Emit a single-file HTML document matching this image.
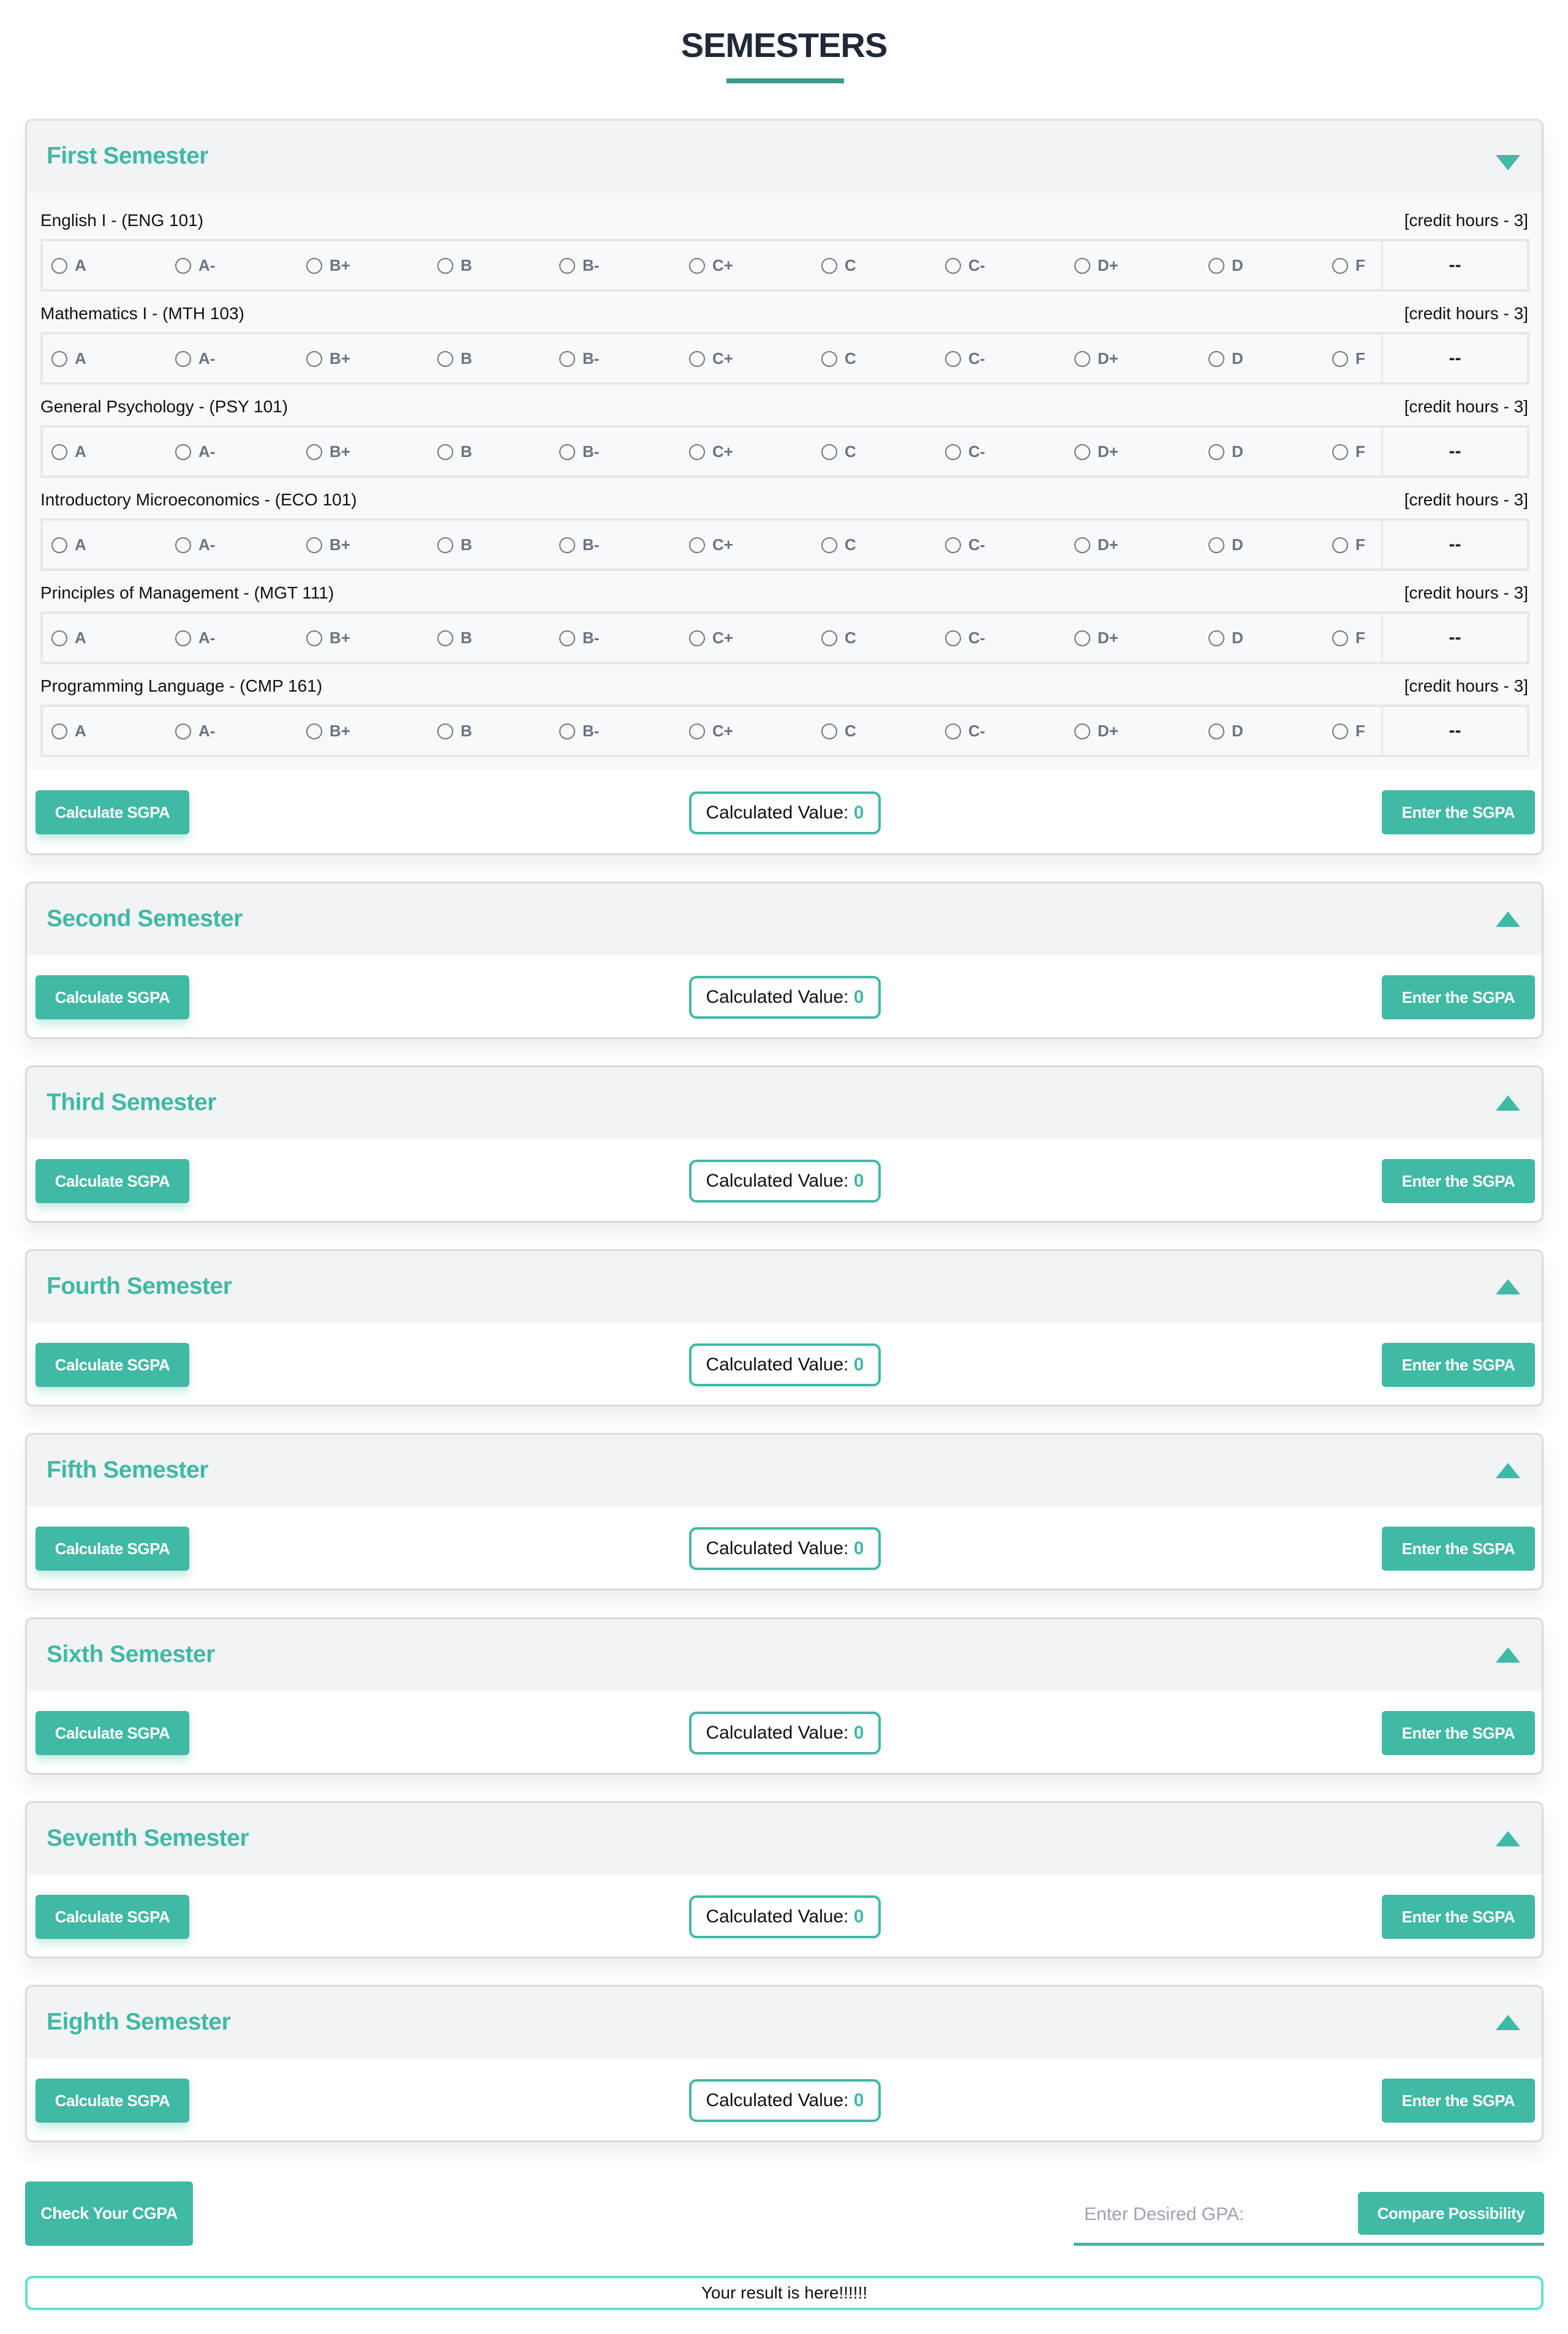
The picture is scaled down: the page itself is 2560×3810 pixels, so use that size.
<!DOCTYPE html>
<html><head><meta charset="utf-8"><style>
*{box-sizing:border-box;margin:0;padding:0}
body{width:2560px;height:3810px;background:#fff;font-family:"Liberation Sans",sans-serif;position:relative;overflow:hidden}
.title{position:absolute;left:0;width:2560px;top:41px;text-align:center;font-size:56px;font-weight:bold;color:#1f2937;letter-spacing:-1px}
.uline{position:absolute;left:1186px;width:192px;top:128px;height:8px;background:#339c8c}
.card{position:absolute;left:41px;width:2479px;border:3px solid #d8dadf;border-top-color:#dcdde2;border-radius:12px;background:#fff;box-shadow:0 18px 30px rgba(0,0,0,0.07);overflow:hidden}
.hd{position:absolute;left:0;top:0;right:0;height:117px;background:#f2f3f5}
.hd span{position:absolute;left:32px;top:36px;font-size:39px;font-weight:bold;color:#40b9a5;letter-spacing:-0.5px}
.tri{position:absolute;left:2398px;top:56px;width:0;height:0;border-left:20px solid transparent;border-right:20px solid transparent}
.down{border-top:25px solid #40b9a5}
.up{border-bottom:25px solid #40b9a5;top:46px}
.body{position:absolute;left:0;right:0;top:117px;height:943px;background:#f8f9fb;border-radius:0 0 14px 14px}
.lbl{position:absolute;left:22px;font-size:28px;color:#111;}
.ch{position:absolute;right:22px;font-size:28px;color:#111}
.box{position:absolute;left:22px;width:2431px;height:86px;border:4px solid #e5e7eb;background:#f8f9fb}
.box .dv{position:absolute;left:2185px;top:0;bottom:0;width:3px;background:#e9eaee}
.box .dd{position:absolute;left:2188px;right:0;top:22px;text-align:center;font-size:30px;font-weight:bold;color:#222}
.r{position:absolute;top:27px;width:26px;height:26px;border:2px solid #777;border-radius:50%}
.rl{position:absolute;top:24px;font-size:26px;font-weight:bold;color:#6b7280}
.btn{position:absolute;background:#40b9a5;color:#fff;font-weight:bold;font-size:26px;border-radius:6px;text-align:center;letter-spacing:-0.5px}
.b1{left:14px;width:251px;height:72px;line-height:72px;box-shadow:0 8px 14px rgba(64,185,165,0.3)}
.b2{left:2212px;width:250px;height:72px;line-height:72px}
.cv{position:absolute;left:1081px;width:313px;height:70px;border:4px solid #40b9a5;border-radius:12px;text-align:center;line-height:62px;font-size:30px;color:#111;background:#fff}
.cv b{color:#40b9a5;font-weight:bold}
</style></head><body>
<div class="title">SEMESTERS</div>
<div class="uline"></div>

<div class="card" style="top:194px;height:1202px">
<div class="hd"><span>First Semester</span><div class="tri down"></div></div>
<div class="body">
<div class="lbl" style="top:30px">English I - (ENG 101)</div><div class="ch" style="top:30px">[credit hours - 3]</div>
<div class="box" style="top:76px"><div class="dv"></div><div class="dd">--</div>
<div class="r" style="left:14px"></div><div class="rl" style="left:52px">A</div><div class="r" style="left:216px"></div><div class="rl" style="left:254px">A-</div><div class="r" style="left:430px"></div><div class="rl" style="left:468px">B+</div><div class="r" style="left:644px"></div><div class="rl" style="left:682px">B</div><div class="r" style="left:843px"></div><div class="rl" style="left:881px">B-</div><div class="r" style="left:1055px"></div><div class="rl" style="left:1093px">C+</div><div class="r" style="left:1271px"></div><div class="rl" style="left:1309px">C</div><div class="r" style="left:1473px"></div><div class="rl" style="left:1511px">C-</div><div class="r" style="left:1684px"></div><div class="rl" style="left:1722px">D+</div><div class="r" style="left:1903px"></div><div class="rl" style="left:1941px">D</div><div class="r" style="left:2105px"></div><div class="rl" style="left:2143px">F</div></div>

<div class="lbl" style="top:182px">Mathematics I - (MTH 103)</div><div class="ch" style="top:182px">[credit hours - 3]</div>
<div class="box" style="top:228px"><div class="dv"></div><div class="dd">--</div>
<div class="r" style="left:14px"></div><div class="rl" style="left:52px">A</div><div class="r" style="left:216px"></div><div class="rl" style="left:254px">A-</div><div class="r" style="left:430px"></div><div class="rl" style="left:468px">B+</div><div class="r" style="left:644px"></div><div class="rl" style="left:682px">B</div><div class="r" style="left:843px"></div><div class="rl" style="left:881px">B-</div><div class="r" style="left:1055px"></div><div class="rl" style="left:1093px">C+</div><div class="r" style="left:1271px"></div><div class="rl" style="left:1309px">C</div><div class="r" style="left:1473px"></div><div class="rl" style="left:1511px">C-</div><div class="r" style="left:1684px"></div><div class="rl" style="left:1722px">D+</div><div class="r" style="left:1903px"></div><div class="rl" style="left:1941px">D</div><div class="r" style="left:2105px"></div><div class="rl" style="left:2143px">F</div></div>

<div class="lbl" style="top:334px">General Psychology - (PSY 101)</div><div class="ch" style="top:334px">[credit hours - 3]</div>
<div class="box" style="top:380px"><div class="dv"></div><div class="dd">--</div>
<div class="r" style="left:14px"></div><div class="rl" style="left:52px">A</div><div class="r" style="left:216px"></div><div class="rl" style="left:254px">A-</div><div class="r" style="left:430px"></div><div class="rl" style="left:468px">B+</div><div class="r" style="left:644px"></div><div class="rl" style="left:682px">B</div><div class="r" style="left:843px"></div><div class="rl" style="left:881px">B-</div><div class="r" style="left:1055px"></div><div class="rl" style="left:1093px">C+</div><div class="r" style="left:1271px"></div><div class="rl" style="left:1309px">C</div><div class="r" style="left:1473px"></div><div class="rl" style="left:1511px">C-</div><div class="r" style="left:1684px"></div><div class="rl" style="left:1722px">D+</div><div class="r" style="left:1903px"></div><div class="rl" style="left:1941px">D</div><div class="r" style="left:2105px"></div><div class="rl" style="left:2143px">F</div></div>

<div class="lbl" style="top:486px">Introductory Microeconomics - (ECO 101)</div><div class="ch" style="top:486px">[credit hours - 3]</div>
<div class="box" style="top:532px"><div class="dv"></div><div class="dd">--</div>
<div class="r" style="left:14px"></div><div class="rl" style="left:52px">A</div><div class="r" style="left:216px"></div><div class="rl" style="left:254px">A-</div><div class="r" style="left:430px"></div><div class="rl" style="left:468px">B+</div><div class="r" style="left:644px"></div><div class="rl" style="left:682px">B</div><div class="r" style="left:843px"></div><div class="rl" style="left:881px">B-</div><div class="r" style="left:1055px"></div><div class="rl" style="left:1093px">C+</div><div class="r" style="left:1271px"></div><div class="rl" style="left:1309px">C</div><div class="r" style="left:1473px"></div><div class="rl" style="left:1511px">C-</div><div class="r" style="left:1684px"></div><div class="rl" style="left:1722px">D+</div><div class="r" style="left:1903px"></div><div class="rl" style="left:1941px">D</div><div class="r" style="left:2105px"></div><div class="rl" style="left:2143px">F</div></div>

<div class="lbl" style="top:638px">Principles of Management - (MGT 111)</div><div class="ch" style="top:638px">[credit hours - 3]</div>
<div class="box" style="top:684px"><div class="dv"></div><div class="dd">--</div>
<div class="r" style="left:14px"></div><div class="rl" style="left:52px">A</div><div class="r" style="left:216px"></div><div class="rl" style="left:254px">A-</div><div class="r" style="left:430px"></div><div class="rl" style="left:468px">B+</div><div class="r" style="left:644px"></div><div class="rl" style="left:682px">B</div><div class="r" style="left:843px"></div><div class="rl" style="left:881px">B-</div><div class="r" style="left:1055px"></div><div class="rl" style="left:1093px">C+</div><div class="r" style="left:1271px"></div><div class="rl" style="left:1309px">C</div><div class="r" style="left:1473px"></div><div class="rl" style="left:1511px">C-</div><div class="r" style="left:1684px"></div><div class="rl" style="left:1722px">D+</div><div class="r" style="left:1903px"></div><div class="rl" style="left:1941px">D</div><div class="r" style="left:2105px"></div><div class="rl" style="left:2143px">F</div></div>

<div class="lbl" style="top:790px">Programming Language - (CMP 161)</div><div class="ch" style="top:790px">[credit hours - 3]</div>
<div class="box" style="top:836px"><div class="dv"></div><div class="dd">--</div>
<div class="r" style="left:14px"></div><div class="rl" style="left:52px">A</div><div class="r" style="left:216px"></div><div class="rl" style="left:254px">A-</div><div class="r" style="left:430px"></div><div class="rl" style="left:468px">B+</div><div class="r" style="left:644px"></div><div class="rl" style="left:682px">B</div><div class="r" style="left:843px"></div><div class="rl" style="left:881px">B-</div><div class="r" style="left:1055px"></div><div class="rl" style="left:1093px">C+</div><div class="r" style="left:1271px"></div><div class="rl" style="left:1309px">C</div><div class="r" style="left:1473px"></div><div class="rl" style="left:1511px">C-</div><div class="r" style="left:1684px"></div><div class="rl" style="left:1722px">D+</div><div class="r" style="left:1903px"></div><div class="rl" style="left:1941px">D</div><div class="r" style="left:2105px"></div><div class="rl" style="left:2143px">F</div></div>
</div>
<div class="btn b1" style="top:1093px">Calculate SGPA</div>
<div class="cv" style="top:1095px">Calculated Value: <b>0</b></div>
<div class="btn b2" style="top:1093px">Enter the SGPA</div>
</div>

<div class="card" style="top:1439px;height:257px"><div class="hd"><span>Second Semester</span><div class="tri up"></div></div>
<div class="btn b1" style="top:150px">Calculate SGPA</div><div class="cv" style="top:151px">Calculated Value: <b>0</b></div><div class="btn b2" style="top:150px">Enter the SGPA</div></div>
<div class="card" style="top:1739px;height:257px"><div class="hd"><span>Third Semester</span><div class="tri up"></div></div>
<div class="btn b1" style="top:150px">Calculate SGPA</div><div class="cv" style="top:151px">Calculated Value: <b>0</b></div><div class="btn b2" style="top:150px">Enter the SGPA</div></div>
<div class="card" style="top:2039px;height:257px"><div class="hd"><span>Fourth Semester</span><div class="tri up"></div></div>
<div class="btn b1" style="top:150px">Calculate SGPA</div><div class="cv" style="top:151px">Calculated Value: <b>0</b></div><div class="btn b2" style="top:150px">Enter the SGPA</div></div>
<div class="card" style="top:2339px;height:257px"><div class="hd"><span>Fifth Semester</span><div class="tri up"></div></div>
<div class="btn b1" style="top:150px">Calculate SGPA</div><div class="cv" style="top:151px">Calculated Value: <b>0</b></div><div class="btn b2" style="top:150px">Enter the SGPA</div></div>
<div class="card" style="top:2640px;height:257px"><div class="hd"><span>Sixth Semester</span><div class="tri up"></div></div>
<div class="btn b1" style="top:150px">Calculate SGPA</div><div class="cv" style="top:151px">Calculated Value: <b>0</b></div><div class="btn b2" style="top:150px">Enter the SGPA</div></div>
<div class="card" style="top:2940px;height:257px"><div class="hd"><span>Seventh Semester</span><div class="tri up"></div></div>
<div class="btn b1" style="top:150px">Calculate SGPA</div><div class="cv" style="top:151px">Calculated Value: <b>0</b></div><div class="btn b2" style="top:150px">Enter the SGPA</div></div>
<div class="card" style="top:3240px;height:257px"><div class="hd"><span>Eighth Semester</span><div class="tri up"></div></div>
<div class="btn b1" style="top:150px">Calculate SGPA</div><div class="cv" style="top:151px">Calculated Value: <b>0</b></div><div class="btn b2" style="top:150px">Enter the SGPA</div></div>

<div class="btn" style="left:41px;top:3561px;width:274px;height:105px;line-height:105px;font-size:27px">Check Your CGPA</div>
<div style="position:absolute;left:1753px;top:3661px;width:768px;height:5px;background:#40b9a5"></div>
<div style="position:absolute;left:1770px;top:3598px;font-size:30px;color:#9ca3af">Enter Desired GPA:</div>
<div class="btn" style="left:2217px;top:3578px;width:304px;height:70px;line-height:70px;font-size:26px">Compare Possibility</div>
<div style="position:absolute;left:41px;top:3715px;width:2479px;height:56px;border:4px solid #5ce5cf;border-radius:12px;text-align:center;line-height:48px;font-size:28px;color:#111">Your result is here!!!!!!</div>
</body></html>
